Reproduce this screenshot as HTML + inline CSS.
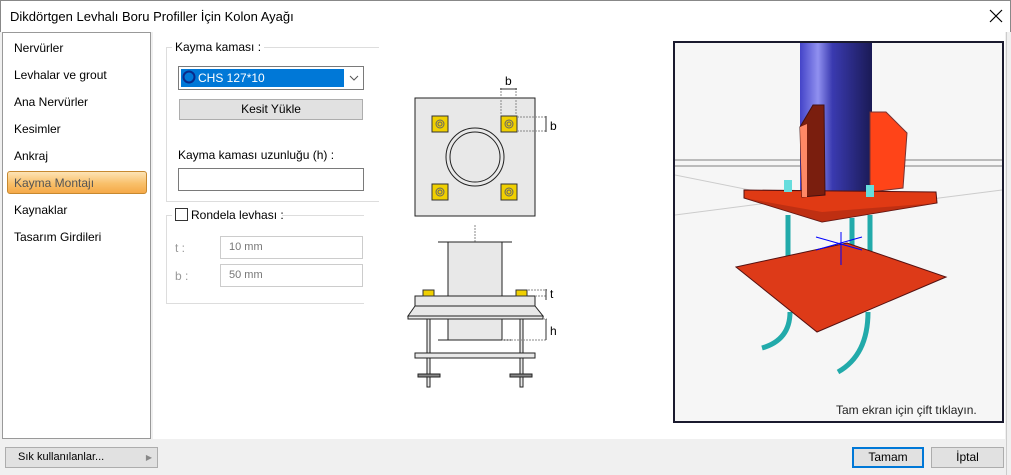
<!DOCTYPE html>
<html><head><meta charset="utf-8"><style>
*{margin:0;padding:0;box-sizing:border-box}
body{width:1011px;height:475px;background:#f0f0f0;font-family:"Liberation Sans",sans-serif;font-size:12px;color:#000;position:relative;overflow:hidden}
.abs{position:absolute}
.title{left:0;top:0;width:1011px;height:32px;background:#fff;border:1px solid #888;border-bottom:none}
.title span{position:absolute;left:9px;top:8px;font-size:13px}
.left{left:2px;top:32px;width:149px;height:407px;background:#fff;border:1px solid #999}
.left div{position:absolute;left:11px;font-size:12px}
.main{left:153px;top:32px;width:852px;height:407px;background:#fff}
.sel{left:6px;top:171px;width:140px;height:23px;border:1px solid #c78930;border-radius:3px;background:linear-gradient(#fde3b5,#f9c06a 55%,#f5a948)}
.inp{border:1px solid #7a7a7a;background:#fff}
.dis{border:1px solid #ccc;background:#fff;color:#777;padding:4px 8px;font-size:11px}
.btn{border:1px solid #adadad;background:#e1e1e1;text-align:center;font-size:12px}
</style></head><body>
<div class="abs title"><span>Dikdörtgen Levhalı Boru Profiller İçin Kolon Ayağı</span>
<svg class="abs" style="left:988px;top:8px" width="14" height="14"><path d="M1 1L13 13M13 1L1 13" stroke="#000" stroke-width="1.2"/></svg></div>
<div class="abs left">
<div style="top:8px">Nervürler</div>
<div style="top:35px">Levhalar ve grout</div>
<div style="top:62px">Ana Nervürler</div>
<div style="top:89px">Kesimler</div>
<div style="top:116px">Ankraj</div>
<div class="sel abs" style="left:4px;top:138px"></div>
<div style="top:143px;color:#555">Kayma Montajı</div>
<div style="top:170px">Kaynaklar</div>
<div style="top:197px">Tasarım Girdileri</div>
</div>
<div class="abs main"></div>
<div class="abs" style="left:166px;top:47px;width:213px;height:155px;border-top:1px solid #ddd;border-left:1px solid #ddd;border-bottom:1px solid #ddd"></div>
<div class="abs" style="left:172px;top:40px;background:#fff;padding:0 3px">Kayma kaması :</div>
<div class="abs inp" style="left:178px;top:66px;width:186px;height:24px"></div>
<div class="abs" style="left:181px;top:69px;width:163px;height:18px;background:#0078d7"></div>
<svg class="abs" style="left:182px;top:70px" width="14" height="14"><circle cx="7" cy="7" r="5.5" fill="none" stroke="#0a2a8a" stroke-width="2"/></svg>
<div class="abs" style="left:198px;top:71px;color:#fff">CHS 127*10</div>
<svg class="abs" style="left:349px;top:74px" width="10" height="8"><path d="M1 2L5 6L9 2" fill="none" stroke="#555"/></svg>
<div class="abs btn" style="left:179px;top:99px;width:184px;height:21px;line-height:19px">Kesit Yükle</div>
<div class="abs" style="left:178px;top:148px">Kayma kaması uzunluğu (h) :</div>
<div class="abs inp" style="left:178px;top:168px;width:186px;height:23px"></div>
<div class="abs" style="left:166px;top:215px;width:198px;height:89px;border-top:1px solid #ddd;border-left:1px solid #ddd;border-bottom:1px solid #ddd"></div>
<div class="abs" style="left:172px;top:207px;background:#fff;width:110px;height:16px"></div>
<div class="abs" style="left:175px;top:208px;width:13px;height:13px;border:1px solid #333;background:#fff"></div>
<div class="abs" style="left:191px;top:208px">Rondela levhası :</div>
<div class="abs" style="left:175px;top:241px;color:#999">t :</div>
<div class="abs" style="left:175px;top:269px;color:#999">b :</div>
<div class="abs dis" style="left:220px;top:236px;width:143px;height:23px">10 mm</div>
<div class="abs dis" style="left:220px;top:264px;width:143px;height:23px">50 mm</div>
<svg class="abs" style="left:400px;top:60px" width="180" height="330" viewBox="400 60 180 330">
<g stroke="#222" fill="#e8e8e8">
<rect x="415" y="98" width="120" height="118"/>
<circle cx="475" cy="157" r="29" fill="#e8e8e8"/><circle cx="475" cy="157" r="25" fill="#e8e8e8"/>
</g>
<g fill="#f0d000" stroke="#333">
<rect x="432" y="116" width="16" height="16"/><rect x="501" y="116" width="16" height="16"/>
<rect x="432" y="184" width="16" height="16"/><rect x="501" y="184" width="16" height="16"/>
</g>
<g fill="none" stroke="#666"><circle cx="440" cy="124" r="4"/><circle cx="509" cy="124" r="4"/><circle cx="440" cy="192" r="4"/><circle cx="509" cy="192" r="4"/><circle cx="440" cy="124" r="2"/><circle cx="509" cy="124" r="2"/><circle cx="440" cy="192" r="2"/><circle cx="509" cy="192" r="2"/></g>
<g stroke="#888" stroke-dasharray="2,1" fill="none"><path d="M501 88V116M516 88V116M517 117H546M517 131H546M475 225V250"/></g>
<g stroke="#333" fill="none"><path d="M500 89H517M546 116V132"/></g>
<text x="505" y="85" font-size="12" font-family="Liberation Sans">b</text>
<text x="550" y="130" font-size="12" font-family="Liberation Sans">b</text>
<g stroke="#222" fill="#e8e8e8">
<rect x="448" y="242" width="54" height="98"/>
<path d="M438 242H512M438 340H512" fill="none"/>
<rect x="415" y="296" width="120" height="10"/>
<path d="M415 306L408 316H543L535 306Z"/>
<rect x="408" y="316" width="135" height="3"/>
<rect x="427" y="319" width="3" height="68"/><rect x="520" y="319" width="3" height="68"/>
<rect x="415" y="353" width="120" height="5"/>
<rect x="418" y="374" width="22" height="3" fill="#888"/><rect x="510" y="374" width="22" height="3" fill="#888"/>
</g>
<g fill="#f0d000" stroke="#333"><rect x="423" y="290" width="11" height="6"/><rect x="516" y="290" width="11" height="6"/></g>
<g stroke="#888" stroke-dasharray="2,1" fill="none"><path d="M528 290H547M535 296H547M543 319H547M502 340H547"/></g>
<g stroke="#333" fill="none"><path d="M546 289V300M546 319V340"/></g>
<text x="550" y="298" font-size="12" font-family="Liberation Sans">t</text>
<text x="550" y="335" font-size="12" font-family="Liberation Sans">h</text>
</svg>
<div class="abs" style="left:673px;top:41px;width:331px;height:382px;border:2px solid #1a1a2e;background:#f6f6f6"></div>
<svg class="abs" style="left:675px;top:43px" width="327" height="378" viewBox="675 43 327 378">
<defs><linearGradient id="col" x1="0" x2="1"><stop offset="0" stop-color="#4444c8"/><stop offset=".25" stop-color="#9090f0"/><stop offset=".45" stop-color="#3a3ab0"/><stop offset="1" stop-color="#1a1a55"/></linearGradient></defs>
<path d="M675 160H1002M675 166H1002" stroke="#bbb" stroke-width="2"/>
<path d="M675 175L800 200M675 215L830 195M1002 190L900 203" stroke="#ccc"/>
<path d="M800 42H872L872 200L800 200Z" fill="url(#col)"/>
<path d="M870 112H886L907 133L903 188L870 192Z" fill="#ff4418" stroke="#733"/>
<path d="M744 190L936 192L937 203L822 222L744 198Z" fill="#e03a14" stroke="#511"/>
<path d="M744 198L822 222L937 203L822 212Z" fill="#a82810" opacity=".6"/>
<path d="M800 127L813 105L824 105L825 195L802 197Z" fill="#7a1e0e" stroke="#411"/>
<path d="M800 127L807 124L807 197L802 197Z" fill="#ff8866"/>
<g stroke="#2aa" stroke-width="5"><path d="M788 215V275M870 215V288M852 218V258"/><path d="M790 312Q790 340 762 348M868 312Q868 355 838 372" fill="none"/></g>
<rect x="784" y="180" width="8" height="12" fill="#6dd"/><rect x="866" y="185" width="8" height="12" fill="#6dd"/>
<path d="M736 267L847 243L946 277L817 332Z" fill="#dd3a18" stroke="#511"/>
<path d="M816 237L862 250M816 250L862 237M841 232V265" stroke="#00f"/>
<text x="836" y="414" font-size="12" font-family="Liberation Sans" fill="#222">Tam ekran için çift tıklayın.</text>
</svg>
<div class="abs" style="left:1006px;top:32px;width:5px;height:443px;background:#f0f0f0;border-left:1px solid #ccc"></div>
<div class="abs btn" style="left:5px;top:447px;width:153px;height:21px;line-height:19px;text-align:left;padding-left:12px;font-size:11px">Sık kullanılanlar...<span style="position:absolute;right:5px;color:#888;font-size:8px">&#9654;</span></div>
<div class="abs btn" style="left:852px;top:447px;width:72px;height:21px;line-height:17px;border:2px solid #0078d7">Tamam</div>
<div class="abs btn" style="left:931px;top:447px;width:73px;height:21px;line-height:19px">İptal</div>
</body></html>
